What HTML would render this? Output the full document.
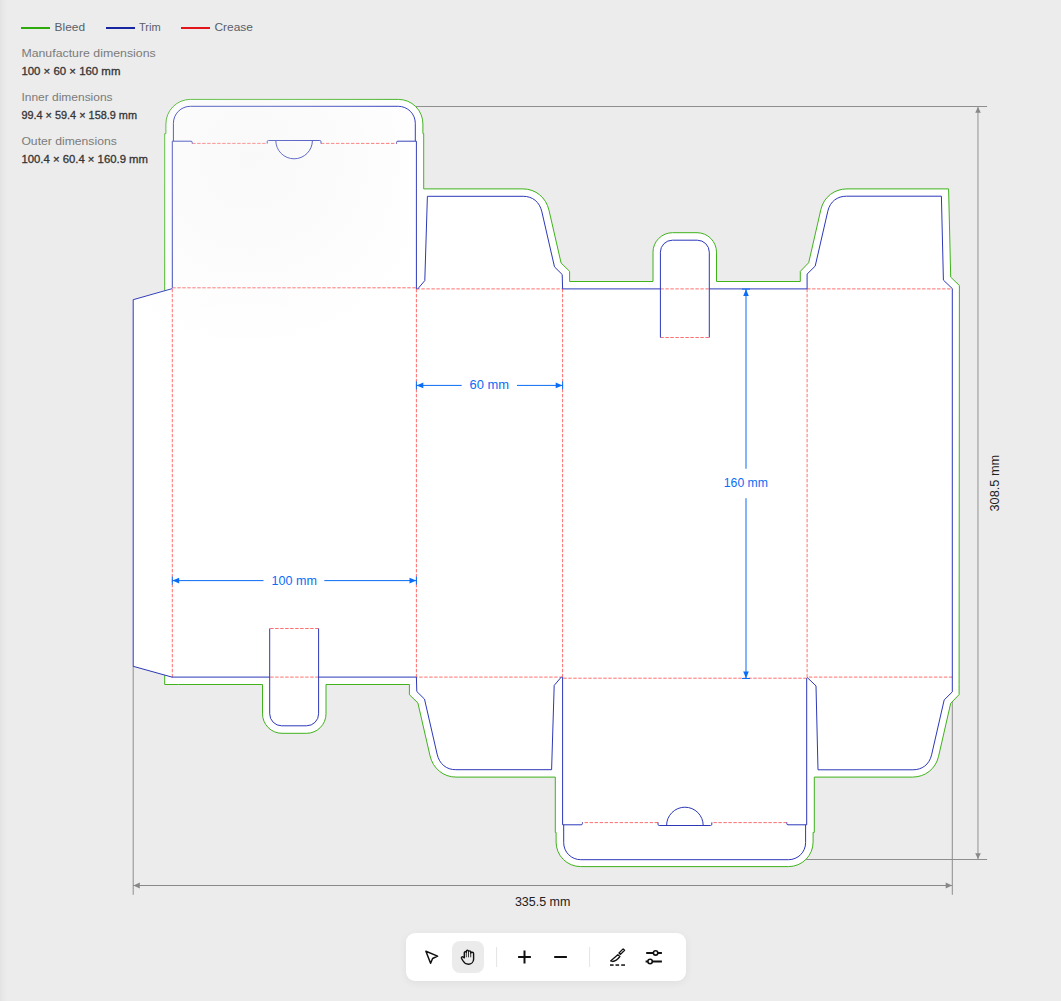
<!DOCTYPE html>
<html><head><meta charset="utf-8">
<style>
html,body{margin:0;padding:0;width:1061px;height:1001px;overflow:hidden;background:#ececec;}
body{position:relative;font-family:"Liberation Sans",sans-serif;}
svg{position:absolute;left:0;top:0;}
.tb{position:absolute;left:406px;top:933px;width:280px;height:48px;background:#fff;border-radius:9px;box-shadow:0 2px 8px rgba(0,0,0,0.06);}
</style></head>
<body>
<svg width="1061" height="1001" viewBox="0 0 1061 1001">
  <g fill="none" stroke="#8e8e8e" stroke-width="1">
    <path d="M415 106.5 L987.1 106.5"/>
    <path d="M800 859.5 L987.1 859.5"/>
    <path d="M133.2 666 L133.2 894.8"/>
    <path d="M952.3 700 L952.3 894.8"/>
  </g>
  <path d="M164.7 290.4 L164.7 133.6 L165.9 133.6 L165.9 123.9 A24.5 24.5 0 0 1 190.4 99.4 L398.4 99.4 A24.5 24.5 0 0 1 422.9 123.9 L422.9 133.6 L423.7 133.6 L423.7 188.9 L523 188.9 C535.5 188.9 546.2 197.5 549 210.3 L561.1 263 L569.6 271.3 L569.6 281.5 L653 281.5 L653 252.2 A19.5 19.5 0 0 1 672.5 232.7 L697 232.7 A19.5 19.5 0 0 1 716.5 252.2 L716.5 281.5 L800.3 281.5 L800.3 271.4 L808.7 262.7 L820.9 209.4 C823.8 197 834.3 188.9 847 188.9 L948.6 188.9 L950.7 277.1 L959.4 285.5 L959.1 684.5 L959.1 694.6 L950.7 703.3 L938.5 756.6 C935.6 769 925.1 777.1 912.4 777.1 L814.3 777.1 L814.3 832.4 L813.1 832.4 L813.1 842.1 A24.5 24.5 0 0 1 788.6 866.6 L580.6 866.6 A24.5 24.5 0 0 1 556.1 842.1 L556.1 832.4 L555.3 832.4 L555.3 777.1 L456 777.1 C443.5 777.1 432.8 768.5 430 755.7 L417.9 703 L409.4 694.7 L409.4 684.5 L326 684.5 L326 713.8 A19.5 19.5 0 0 1 306.5 733.3 L282 733.3 A19.5 19.5 0 0 1 262.5 713.8 L262.5 684.5 L178.7 684.5 L164.7 684.5 L164.7 675.1 Z" fill="#fff" stroke="#3fb21c" stroke-width="1"/>
  <path d="M172.3 288.6 L133.2 299.7 L133.2 666.3 L172.3 677.2 Z" fill="#fff" stroke="none"/>
  <path d="M172.3 287.8 L416.4 287.8 M806.7 678.2 L562.6 678.2 M416.4 288.9 L562.6 288.9 M562.6 677.1 L416.4 677.1 M660.4 288.9 L709.3 288.9 M318.6 677.1 L269.7 677.1 M660.4 337.5 L709.3 337.5 M318.6 628.5 L269.7 628.5 M192.2 143.4 L267.2 143.4 M786.8 822.6 L711.8 822.6 M321 143.4 L396.6 143.4 M658 822.6 L582.4 822.6 M807.1 288.9 L952.3 288.9 M952.3 677.1 L807.1 677.1 M172.3 288.9 L172.3 677.1 M416.4 288.9 L416.4 677.1 M562.6 288.9 L562.6 677.1 M807.1 288.9 L807.1 677.1" fill="none" stroke="#ff4a4a" stroke-opacity="0.8" stroke-width="1" stroke-dasharray="3.4 1.6"/>
  <path d="M172.3 287.8 L172.3 141.2 L191 141.2 Q192.2 141.2 192.2 142.4 L192.2 143.6 M806.7 678.2 L806.7 824.8 L788 824.8 Q786.8 824.8 786.8 823.6 L786.8 822.4 M173.4 141.2 L173.4 123.3 A17 17 0 0 1 190.4 106.3 L398.3 106.3 A17 17 0 0 1 415.3 123.3 L415.3 141.2 M805.6 824.8 L805.6 842.7 A17 17 0 0 1 788.6 859.7 L580.7 859.7 A17 17 0 0 1 563.7 842.7 L563.7 824.8 M416.4 288.9 L416.4 141.2 L397.8 141.2 Q396.6 141.2 396.6 142.4 L396.6 143.6 M562.6 677.1 L562.6 824.8 L581.2 824.8 Q582.4 824.8 582.4 823.6 L582.4 822.4 M267.2 143.6 L267.2 141.7 Q267.2 140.5 268.4 140.5 L319.8 140.5 Q321 140.5 321 141.7 L321 143.6 M711.8 822.4 L711.8 824.3 Q711.8 825.5 710.6 825.5 L659.2 825.5 Q658 825.5 658 824.3 L658 822.4 M275.8 140.5 A18.3 18.3 0 0 0 312.4 140.5 M703.2 825.5 A18.3 18.3 0 0 0 666.6 825.5 M417.5 289.2 L424.8 280.6 L427.4 196.3 L523.2 196.3 C532.5 196.3 539.6 201.8 541.9 211.9 L554.5 266.9 L562.2 274.5 L562.6 288.9 M561.5 676.8 L554.2 685.4 L551.6 769.7 L455.8 769.7 C446.5 769.7 439.4 764.2 437.1 754.1 L424.5 699.1 L416.8 691.5 L416.4 677.1 M562.6 288.9 L660.4 288.9 M416.4 677.1 L318.6 677.1 M709.3 288.9 L807.1 288.9 M269.7 677.1 L171.9 677.1 M660.4 337.5 L660.4 252.2 A12 12 0 0 1 672.4 240.2 L697.3 240.2 A12 12 0 0 1 709.3 252.2 L709.3 337.5 M318.6 628.5 L318.6 713.8 A12 12 0 0 1 306.6 725.8 L281.7 725.8 A12 12 0 0 1 269.7 713.8 L269.7 628.5 M807.1 288.9 L807.1 274.1 L815.2 266.1 L827.8 211.2 C830.1 201.3 837.4 196.2 846.5 196.2 L941.4 196.2 L943.4 280.1 L952.3 288.6 M952.3 677.1 L952.3 691.9 L944.2 699.9 L931.6 754.8 C929.3 764.7 922 769.8 912.9 769.8 L818 769.8 L816 685.9 L807.1 677.4 M952.3 288.6 L952.3 677.4 M172.3 288.6 L133.2 299.7 L133.2 666.3 L172.3 677.2" fill="none" stroke="#2c38b8" stroke-width="1"/>
  <defs>
    <radialGradient id="sheen" cx="250" cy="160" r="190" gradientUnits="userSpaceOnUse">
      <stop offset="0" stop-color="#eeeeee" stop-opacity="0.35"/>
      <stop offset="0.55" stop-color="#eeeeee" stop-opacity="0.18"/>
      <stop offset="1" stop-color="#eeeeee" stop-opacity="0"/>
    </radialGradient>
    <linearGradient id="lstrip" x1="0" y1="0" x2="1" y2="0">
      <stop offset="0" stop-color="#e2e2e2"/>
      <stop offset="1" stop-color="#ececec" stop-opacity="0"/>
    </linearGradient>
  </defs>
  <rect x="0" y="0" width="9" height="1001" fill="url(#lstrip)"/>
  <rect x="0" y="0" width="520" height="460" fill="url(#sheen)"/>
  <g fill="#0b6df6" stroke="none">
    <!-- 60mm -->
    <rect x="416.4" y="384.9" width="45.3" height="1"/>
    <rect x="517" y="384.9" width="45.6" height="1"/>
    <rect x="415.9" y="381.4" width="1" height="8"/>
    <rect x="562.1" y="381.4" width="1" height="8"/>
    <path d="M416.6 385.4 L423.3 382.6 L423.3 388.2 Z"/>
    <path d="M562.4 385.4 L555.7 382.6 L555.7 388.2 Z"/>
    <!-- 100mm -->
    <rect x="172.3" y="580.1" width="91.2" height="1"/>
    <rect x="324.3" y="580.1" width="92.1" height="1"/>
    <rect x="171.8" y="576.6" width="1" height="8"/>
    <rect x="415.9" y="576.6" width="1" height="8"/>
    <path d="M172.5 580.6 L179.2 577.8 L179.2 583.4 Z"/>
    <path d="M416.2 580.6 L409.5 577.8 L409.5 583.4 Z"/>
    <!-- 160mm -->
    <rect x="745.5" y="289" width="1" height="179.8"/>
    <rect x="745.5" y="498.2" width="1" height="180.3"/>
    <rect x="742" y="288.6" width="8" height="1"/>
    <rect x="742" y="678" width="8" height="1"/>
    <path d="M746 289.2 L743.2 295.9 L748.8 295.9 Z"/>
    <path d="M746 678.3 L743.2 671.6 L748.8 671.6 Z"/>
  </g>
  <g fill="#0b6df6" font-family="Liberation Sans, sans-serif" font-size="12.5">
    <text x="469.6" y="388.9" textLength="39.5" lengthAdjust="spacingAndGlyphs">60 mm</text>
    <text x="271.6" y="584.6" textLength="45.4" lengthAdjust="spacingAndGlyphs">100 mm</text>
    <text x="723.8" y="486.9" textLength="44.2" lengthAdjust="spacingAndGlyphs">160 mm</text>
  </g>
  <!-- gray dims -->
  <g fill="#9a9a9a">
    <rect x="977.4" y="106.5" width="1.1" height="753"/>
  </g>
  <g fill="#888">
    <rect x="133.2" y="885" width="819.1" height="1"/>
    <path d="M978 107 L975.2 112.8 L980.8 112.8 Z"/>
    <path d="M978 859 L975.2 853.2 L980.8 853.2 Z"/>
    <path d="M133.4 885.5 L139.8 882.4 L139.8 888.6 Z"/>
    <path d="M952.1 885.5 L945.7 882.4 L945.7 888.6 Z"/>
  </g>
  <g fill="#222" font-family="Liberation Sans, sans-serif" font-size="12.5">
    <text x="514.9" y="905.8" textLength="55.5" lengthAdjust="spacingAndGlyphs">335.5 mm</text>
    <text transform="translate(999.1 511.5) rotate(-90)" x="0" y="0" textLength="56.7" lengthAdjust="spacingAndGlyphs">308.5 mm</text>
  </g>
  <!-- legend -->
  <g>
    <rect x="21" y="27" width="29" height="2" fill="#2eab0c"/>
    <rect x="106" y="27" width="29" height="2" fill="#1626a0"/>
    <rect x="181" y="27" width="29" height="2" fill="#e3141a"/>
  </g>
  <g fill="#5a5e68" font-family="Liberation Sans, sans-serif" font-size="11.6">
    <text x="54.6" y="31.2" textLength="30.4" lengthAdjust="spacingAndGlyphs">Bleed</text>
    <text x="139" y="31.2" textLength="21.7" lengthAdjust="spacingAndGlyphs">Trim</text>
    <text x="214.4" y="31.2" textLength="38.5" lengthAdjust="spacingAndGlyphs">Crease</text>
  </g>
  <g fill="#7b7b7b" font-family="Liberation Sans, sans-serif" font-size="10.9">
    <text x="21.4" y="57" textLength="134.3" lengthAdjust="spacingAndGlyphs">Manufacture dimensions</text>
    <text x="21.4" y="101.3" textLength="91.2" lengthAdjust="spacingAndGlyphs">Inner dimensions</text>
    <text x="21.4" y="145.1" textLength="95.4" lengthAdjust="spacingAndGlyphs">Outer dimensions</text>
  </g>
  <g fill="#353535" stroke="#353535" stroke-width="0.3" font-family="Liberation Sans, sans-serif" font-size="10.8">
    <text x="21.4" y="74.7" textLength="99" lengthAdjust="spacingAndGlyphs">100 × 60 × 160 mm</text>
    <text x="21.4" y="119.2" textLength="115.6" lengthAdjust="spacingAndGlyphs">99.4 × 59.4 × 158.9 mm</text>
    <text x="21.4" y="163" textLength="126.6" lengthAdjust="spacingAndGlyphs">100.4 × 60.4 × 160.9 mm</text>
  </g>
</svg>
<div class="tb">
  <svg width="280" height="48" viewBox="0 0 280 48" style="position:absolute;left:0;top:0">
    <rect x="46" y="8" width="32" height="32" rx="8" fill="#ebebeb"/>
    <rect x="90.1" y="14" width="1" height="20" fill="#e4e4e4"/>
    <rect x="183.1" y="14" width="1" height="20" fill="#e4e4e4"/>
    <g fill="none" stroke="#111" stroke-width="1.5" stroke-linejoin="round" stroke-linecap="round">
      <path d="M19.9 18.3 L31.6 23.1 L26.6 25.5 L24.6 30.3 Z"/>
      <path d="M58.3 24.8 L58.3 19.6 C58.3 18.3 60.3 18.3 60.3 19.6 L60.3 18.2 C60.3 16.7 62.5 16.7 62.5 18.2 L62.5 18.8 C62.5 17.5 64.7 17.5 64.7 18.8 L64.7 20.2 C64.7 18.9 67.6 18.9 67.6 20.6 L67.6 26.3 C67.6 29.2 65.2 31.2 62.3 31.2 C59.8 31.2 58.3 30 57.1 28 L55.5 25.3 C55 24.3 56.2 23.4 57.1 24 L58.3 24.8" stroke-width="1.4"/>
    </g>
    <g fill="none" stroke="#222" stroke-width="0.9">
      <path d="M60.3 19.6 V24.3 M62.5 18.2 V24.3 M64.7 18.8 V24.3"/>
    </g>
    <g fill="none" stroke="#111" stroke-width="2">
      <path d="M112.1 24 H124.9 M118.5 17.6 V30.4"/>
      <path d="M148.2 24 H160.9"/>
      <path d="M240.2 19.9 H255.9 M239.6 28.5 H255.9"/>
    </g>
    <g fill="#fff" stroke="#111" stroke-width="1.6">
      <circle cx="249.6" cy="19.9" r="2.2"/>
      <circle cx="244.1" cy="28.5" r="2.2"/>
    </g>
    <g fill="none" stroke="#111" stroke-width="1.3" stroke-linejoin="round">
      <path d="M217.1 15.9 L218.6 17.3 L214.5 21.4 L213 20 Z"/>
      <path d="M204.6 27.9 L211.8 21.7 L213.9 23.5 C212 26 209.5 28.3 206.6 28.5 Z"/>
    </g>
    <g fill="#111">
      <rect x="204" y="31.3" width="3.6" height="1.5"/>
      <rect x="209.5" y="31.3" width="3.6" height="1.5"/>
      <rect x="215.2" y="31.3" width="3.8" height="1.5"/>
    </g>
  </svg>
</div>
</body></html>
